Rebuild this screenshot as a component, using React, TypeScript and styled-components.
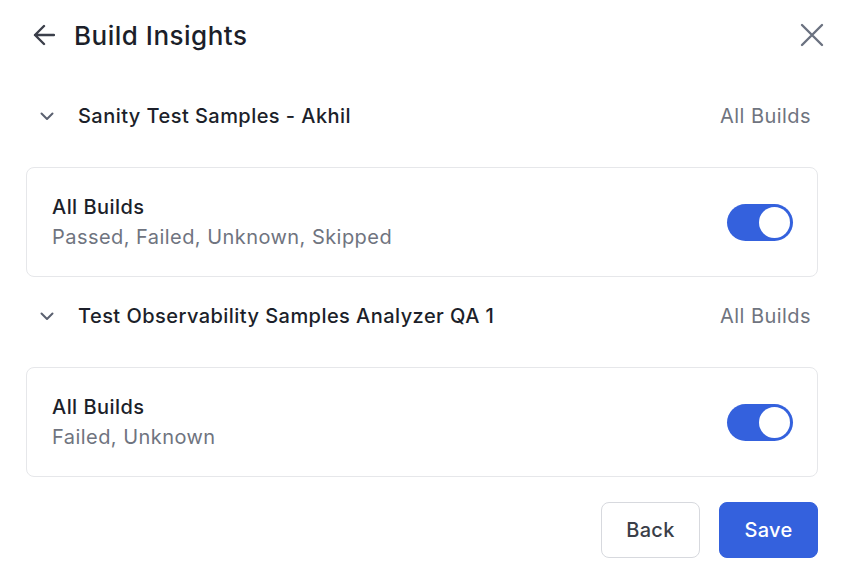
import { FC, useState } from 'react'
import styled, { createGlobalStyle } from 'styled-components'

const GlobalStyle = createGlobalStyle`
   body {
      margin: 0;
      background: #ffffff;
      font-family: Inter, 'Noto Sans', sans-serif;
      letter-spacing: 0.45px;
      -webkit-font-smoothing: antialiased;
   }
`

const projects = [
   { id: 1, name: 'Sanity Test Samples - Akhil', statuses: 'Passed, Failed, Unknown, Skipped' },
   { id: 2, name: 'Test Observability Samples Analyzer QA 1', statuses: 'Failed, Unknown' },
]

const BackArrow: FC = () => (
   <svg width='22' height='22' viewBox='0 0 22 22' fill='none'>
      <path
         d='M21 11H2M11 2L2 11L11 20'
         stroke='#3b3f4a'
         strokeWidth='2.4'
         strokeLinecap='round'
         strokeLinejoin='round'
      />
   </svg>
)

const CloseIcon: FC = () => (
   <svg width='24' height='24' viewBox='0 0 24 24' fill='none'>
      <path d='M2 2L22 22M22 2L2 22' stroke='#6b7280' strokeWidth='2.4' strokeLinecap='round' />
   </svg>
)

const Chevron: FC = () => (
   <svg width='14' height='9' viewBox='0 0 14 9' fill='none'>
      <path
         d='M1.5 1.5L7 7L12.5 1.5'
         stroke='#5b6170'
         strokeWidth='2'
         strokeLinecap='round'
         strokeLinejoin='round'
      />
   </svg>
)

const App: FC = () => {
   const [enabled, setEnabled] = useState<Record<number, boolean>>({ 1: true, 2: true })

   return (
      <>
         <GlobalStyle />
         <Page>
            <Header>
               <TitleGroup>
                  <IconButton aria-label='Back'>
                     <BackArrow />
                  </IconButton>
                  <Title>Build Insights</Title>
               </TitleGroup>
               <IconButton aria-label='Close'>
                  <CloseIcon />
               </IconButton>
            </Header>

            <Sections>
               {projects.map((project) => (
                  <Section key={project.id}>
                     <SectionHeader>
                        <SectionName>
                           <Chevron />
                           <span>{project.name}</span>
                        </SectionName>
                        <Muted>All Builds</Muted>
                     </SectionHeader>

                     <Card>
                        <CardText>
                           <CardTitle>All Builds</CardTitle>
                           <Muted>{project.statuses}</Muted>
                        </CardText>
                        <Toggle
                           $on={enabled[project.id]}
                           onClick={() =>
                              setEnabled((prev) => ({ ...prev, [project.id]: !prev[project.id] }))
                           }
                        >
                           <Knob />
                        </Toggle>
                     </Card>
                  </Section>
               ))}
            </Sections>

            <Footer>
               <Button>Back</Button>
               <Button $primary>Save</Button>
            </Footer>
         </Page>
      </>
   )
}

export default App

const Page = styled.div`
   display: flex;
   flex-direction: column;
   padding: 0 32px 0 26px;
`

const Header = styled.header`
   display: flex;
   align-items: center;
   justify-content: space-between;
   height: 70px;
   padding-left: 7px;
   margin-right: -6px;
`

const TitleGroup = styled.div`
   display: flex;
   align-items: center;
   gap: 19px;
`

const IconButton = styled.button`
   display: flex;
   align-items: center;
   justify-content: center;
   background: none;
   border: none;
   padding: 0;
   cursor: pointer;
`

const Title = styled.h1`
   margin: 0;
   font-size: 26px;
   font-weight: 500;
   color: #1c1f2a;
   letter-spacing: 0.5px;
`

const Sections = styled.div`
   display: flex;
   flex-direction: column;
   gap: 9px;
   margin-top: 16px;
`

const Section = styled.section`
   display: flex;
   flex-direction: column;
   gap: 21px;
`

const SectionHeader = styled.div`
   display: flex;
   align-items: center;
   justify-content: space-between;
   height: 60px;
   padding: 0 7px 0 14px;
`

const SectionName = styled.div`
   display: flex;
   align-items: center;
   gap: 24px;
   font-size: 20px;
   font-weight: 500;
   color: #1c1f2a;
`

const Muted = styled.span`
   font-size: 20px;
   color: #6f7480;
`

const Card = styled.div`
   display: flex;
   align-items: center;
   justify-content: space-between;
   height: 110px;
   box-sizing: border-box;
   padding: 0 24px 0 25px;
   border: 1px solid #e6e7ea;
   border-radius: 8px;
`

const CardText = styled.div`
   display: flex;
   flex-direction: column;
   line-height: 30px;
`

const CardTitle = styled.span`
   font-size: 20px;
   font-weight: 500;
   color: #1c1f2a;
`

const Toggle = styled.button<{ $on?: boolean }>`
   display: flex;
   align-items: center;
   justify-content: ${({ $on }) => ($on ? 'flex-end' : 'flex-start')};
   width: 66px;
   height: 37px;
   padding: 3px;
   box-sizing: border-box;
   border: none;
   border-radius: 999px;
   background: ${({ $on }) => ($on ? '#3461dd' : '#d1d5db')};
   cursor: pointer;
`

const Knob = styled.span`
   width: 31px;
   height: 31px;
   border-radius: 50%;
   background: #ffffff;
`

const Footer = styled.footer`
   display: flex;
   justify-content: flex-end;
   gap: 19px;
   margin-top: 25px;
`

const Button = styled.button<{ $primary?: boolean }>`
   width: 99px;
   height: 56px;
   border-radius: 8px;
   font-family: inherit;
   font-size: 20px;
   font-weight: 500;
   letter-spacing: 0.3px;
   cursor: pointer;
   border: 1px solid ${({ $primary }) => ($primary ? '#3461dd' : '#d7d9de')};
   background: ${({ $primary }) => ($primary ? '#3461dd' : '#ffffff')};
   color: ${({ $primary }) => ($primary ? '#ffffff' : '#3a3e48')};
`
